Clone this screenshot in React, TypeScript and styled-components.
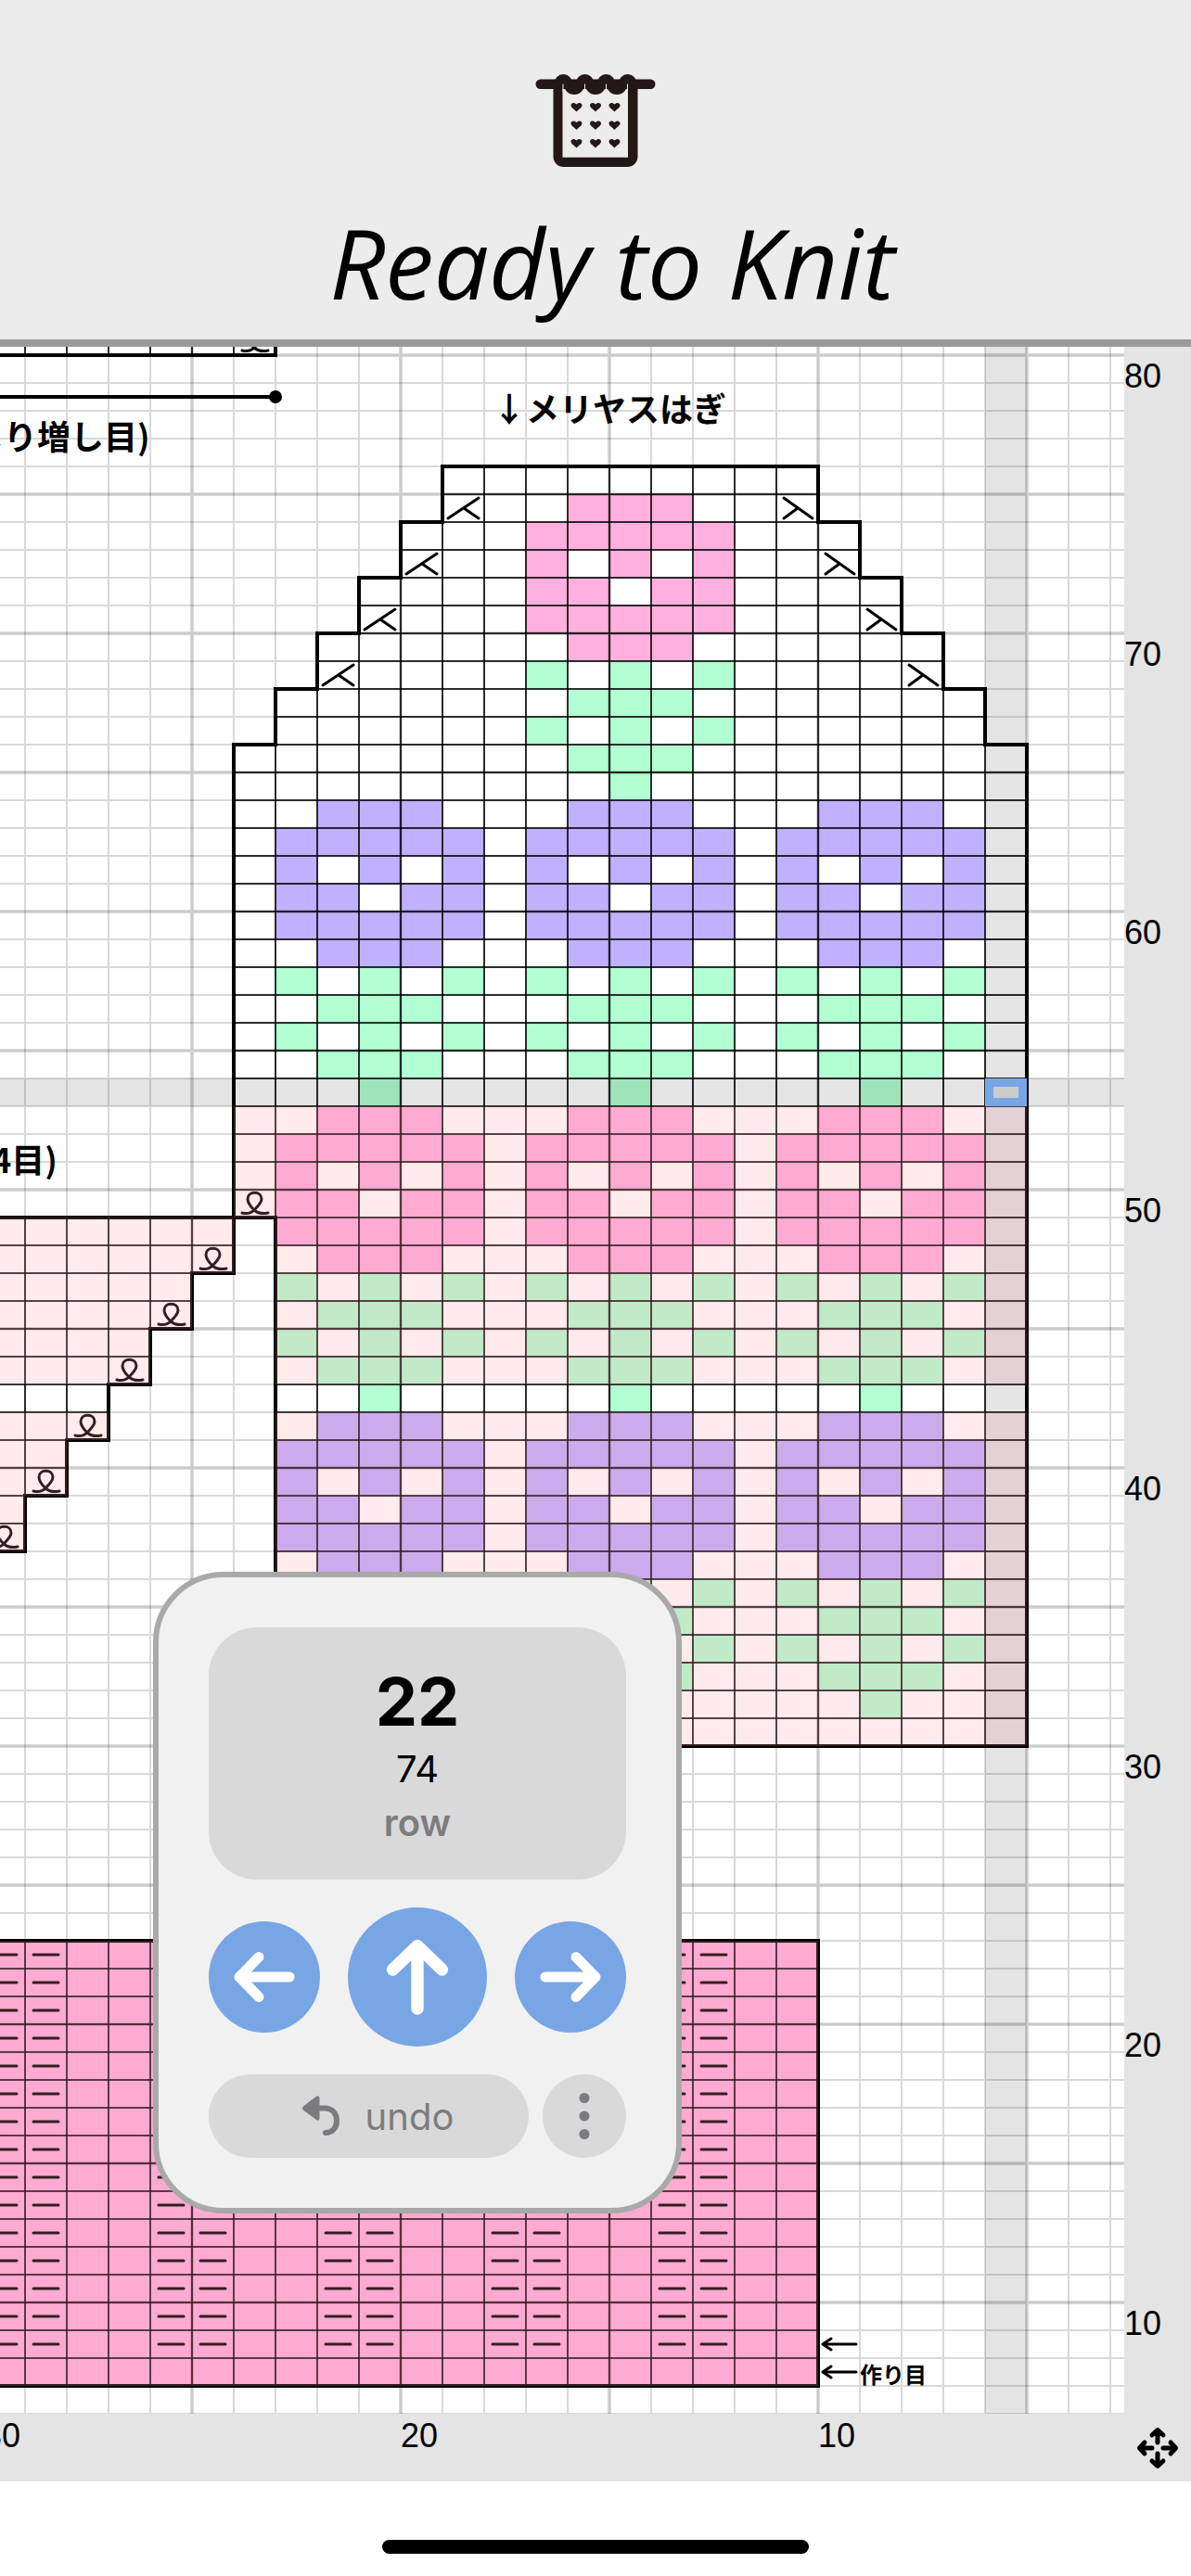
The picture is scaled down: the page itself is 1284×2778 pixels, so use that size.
import React, { useState } from "react";
import styled, { createGlobalStyle } from "styled-components";

const GlobalStyle = createGlobalStyle`
  * {
    box-sizing: border-box;
  }

  body {
    margin: 0;
    background: #fff;
    font-family: Inter, "Noto Sans CJK JP", sans-serif;
  }
`;

const Page = styled.div`
  display: flex;
  flex-direction: column;
  min-height: 100vh;
`;

const Header = styled.header`
  display: flex;
  flex-direction: column;
  align-items: center;
  padding: 80px 0 23px;
  background: #ececec;
  border-bottom: 8px solid #9b9b9b;

  svg {
    width: 130px;
    height: 100px;
  }
`;

const Title = styled.h1`
  margin: 43px 0 0;
  padding-left: 36px;
  font-family: "Open Sans", "Noto Sans", sans-serif;
  font-size: 105px;
  font-style: italic;
  font-weight: 400;
  line-height: 120px;
  white-space: nowrap;
`;

const Board = styled.main`
  position: relative;
  display: grid;
  grid-template-columns: 1fr 72px;
  grid-template-rows: auto 73px;
  background: #e4e4e4;
`;

const ChartView = styled.div`
  display: flex;
  justify-content: flex-end;
  overflow: hidden;
  background: #fff;

  svg {
    flex-shrink: 0;
    display: block;
    width: 1212px;
    height: 2229px;
  }
`;

const RowAxis = styled.div`
  display: flex;
  flex-direction: column;
  gap: 260px;
  padding-top: 12px;
  font-family: "Liberation Sans", sans-serif;
  font-size: 36px;
  line-height: 40px;
`;

const ColumnAxis = styled.div`
  display: flex;
  justify-content: flex-end;
  overflow: hidden;
  padding-right: 288px;
  padding-top: 4px;
  font-family: "Liberation Sans", sans-serif;
  font-size: 36px;
  line-height: 40px;

  span {
    flex: 0 0 450px;
  }

  span:last-child {
    flex-basis: 42px;
  }
`;

const MoveButton = styled.button`
  display: flex;
  align-items: center;
  justify-content: center;
  padding: 0;
  border: 0;
  background: none;

  svg {
    width: 46px;
    height: 46px;
  }
`;

const Counter = styled.section`
  position: absolute;
  left: 165px;
  bottom: 289px;
  display: flex;
  flex-direction: column;
  gap: 30px;
  width: 570px;
  padding: 54px;
  background: #f1f1f1;
  border: 6px solid #a9a9a9;
  border-radius: 76px;
`;

const Display = styled.div`
  display: flex;
  flex-direction: column;
  align-items: center;
  padding: 36px 0 32px;
  background: #d9d9d9;
  border-radius: 52px;
`;

const RowCount = styled.div`
  font-size: 72px;
  font-weight: 700;
  line-height: 88px;
`;

const RowTotal = styled.div`
  font-size: 40px;
  line-height: 58px;
`;

const RowUnit = styled.div`
  color: #7c7c80;
  font-size: 40px;
  font-weight: 600;
  line-height: 58px;
`;

const Controls = styled.div`
  display: flex;
  align-items: center;
  justify-content: space-between;
`;

const RoundButton = styled.button<{ $size: number }>`
  width: ${({ $size }) => $size}px;
  height: ${({ $size }) => $size}px;
  padding: 0;
  border: 0;
  border-radius: 50%;
  background: #78a6e5;

  svg {
    display: block;
    width: 100%;
    height: 100%;
  }
`;

const Actions = styled.div`
  display: flex;
  gap: 15px;
`;

const UndoButton = styled.button`
  flex: 1;
  display: flex;
  align-items: center;
  justify-content: center;
  gap: 28px;
  height: 90px;
  padding: 0 0 0 20px;
  border: 0;
  border-radius: 45px;
  background: #d9d9d9;
  color: #7c7c80;
  font-family: inherit;
  font-size: 40px;

  svg {
    width: 40px;
    height: 44px;
  }
`;

const MoreButton = styled(RoundButton)`
  background: #d9d9d9;
`;

const HomeArea = styled.footer`
  flex: 1;
  display: flex;
  align-items: flex-end;
  justify-content: center;
  min-height: 102px;
  padding-bottom: 24px;
`;

const HomeIndicator = styled.div`
  width: 460px;
  height: 15px;
  border-radius: 8px;
  background: #000;
`;

const CELL_W = 45;
const CELL_H = 30;
const CHART_W = 1212;
const CHART_H = 2229;
const CURRENT_ROW = 26;
const CURRENT_COL = 23;
const SKIPPED_ROW = 37;

const X = (col: number) => 27 + col * CELL_W;
const Y = (row: number) => 9 + row * CELL_H;

const PINK = "#ffb0de";
const GREEN = "#b1ffd2";
const PURPLE = "#bfb1ff";

type Span = { row: number; from: number; to: number };

const rows = (start: number, end: number, from: number, to: number): Span[] =>
  Array.from({ length: end - start + 1 }, (_, i) => ({ row: start + i, from, to }));

const spans: Span[] = [
  ...rows(-1, -1, -1, 6),
  ...rows(4, 5, 10, 19),
  ...rows(6, 7, 9, 20),
  ...rows(8, 9, 8, 21),
  ...rows(10, 11, 7, 22),
  ...rows(12, 13, 6, 23),
  ...rows(14, 30, 5, 24),
  ...rows(31, 49, 6, 24),
  ...rows(31, 32, -1, 5),
  ...rows(33, 34, -1, 4),
  ...rows(35, 36, -1, 3),
  ...rows(37, 38, -1, 2),
  ...rows(39, 40, -1, 1),
  ...rows(41, 42, -1, 0),
  ...rows(57, 72, -1, 19),
];

const doneSpans = spans.filter((s) => s.row > CURRENT_ROW && s.row !== SKIPPED_ROW);

const horizontals = spans
  .map((s) => `M${X(s.from)} ${Y(s.row)}H${X(s.to)}M${X(s.from)} ${Y(s.row + 1)}H${X(s.to)}`)
  .join("");

const verticals = spans
  .map((s) => {
    let d = "";
    for (let c = s.from; c <= s.to; c++) d += `M${X(c)} ${Y(s.row)}v${CELL_H}`;
    return d;
  })
  .join("");

// five stitches wide: six rows of petals, then five rows of stem
const petals = [".###.", "#####", "#.#.#", "##.##", "#####", ".###."];
const stem = ["#.#.#", ".###.", "#.#.#", ".###.", "..#.."];

const flowers = [
  { row: 5, col: 12, color: PINK },
  ...[6, 12, 18].map((col) => ({ row: 16, col, color: PURPLE })),
  ...[6, 12, 18].map((col) => ({ row: 27, col, color: PINK })),
  ...[6, 12, 18].map((col) => ({ row: 38, col, color: PURPLE })),
];

const steps = (points: number[][]) =>
  points.map(([c, r], i) => `${i ? "L" : "M"}${X(c)} ${Y(r)}`).join("");

const outlines = [
  steps([[-1, 0], [6, 0], [6, -1]]),
  steps([
    [10, 4], [19, 4], [19, 6], [20, 6], [20, 8], [21, 8], [21, 10], [22, 10], [22, 12],
    [23, 12], [23, 14], [24, 14], [24, 50], [6, 50], [6, 31], [5, 31], [5, 14], [6, 14],
    [6, 12], [7, 12], [7, 10], [8, 10], [8, 8], [9, 8], [9, 6], [10, 6], [10, 4],
  ]),
  steps([
    [-1, 31], [5, 31], [5, 33], [4, 33], [4, 35], [3, 35], [3, 37], [2, 37], [2, 39],
    [1, 39], [1, 41], [0, 41], [0, 43], [-1, 43],
  ]),
  steps([[-1, 57], [19, 57], [19, 73], [-1, 73]]),
];

const LEFT_DECREASE = "M6 26L39 4M23 15L39 26";
const RIGHT_DECREASE = "M8 4L39 26M8 26L23 15";
const LOOP = "M9 25Q17 27 22 22C26 18 30 14 30 10C30 1 15 1 15 10C15 14 18 18 22 22Q28 27 37 25";
const PURL = "M9 15H36";

const symbols: { col: number; row: number; d: string }[] = [
  ...[0, 1, 2, 3].map((i) => ({ col: 10 - i, row: 5 + i * 2, d: LEFT_DECREASE })),
  ...[0, 1, 2, 3].map((i) => ({ col: 18 + i, row: 5 + i * 2, d: RIGHT_DECREASE })),
  ...[0, 1, 2, 3, 4, 5, 6].map((i) => ({ col: 5 - i, row: 30 + i * 2, d: LOOP })),
  { col: 5, row: -1, d: LOOP },
];

for (let row = 57; row < 72; row++) {
  [-1, 0, 3, 4, 7, 8, 11, 12, 15, 16].forEach((col) => symbols.push({ col, row, d: PURL }));
}

const gridLines = (major: boolean) => {
  let d = "";
  for (let r = 0; r <= 74; r++) if ((r % 5 === 0) === major) d += `M0 ${Y(r)}H${CHART_W}`;
  for (let c = 0; c <= 26; c++) if ((c % 5 === 4) === major) d += `M${X(c)} 0V${CHART_H}`;
  return d;
};

const Logo: React.FC = () => (
  <svg viewBox="0 0 130 100" fill="#231815" aria-hidden="true">
    <rect x="0.5" y="5.5" width="129" height="10.5" rx="5.2" />
    <path
      fillRule="evenodd"
      d="M19.5 9H110.5V89a11 11 0 0 1-11 11H30.5a11 11 0 0 1-11-11ZM29.5 10V89.7H100V10Z"
    />
    {[30.3, 53.6, 76.5, 99.7].map((x) => (
      <path key={x} d={`M${x - 9.8} 10a9.8 10 0 0 1 19.6 0Z`} />
    ))}
    {[42, 65, 88].map((x) => (
      <path key={x} d={`M${x - 11} 8V12c0 5 5 10 11 10s11-5 11-10V8Z`} />
    ))}
    <path d="M30 10.5V19M53.5 10.5V19M76.5 10.5V19M99.5 10.5V19" stroke="#ececec" />
    {[31, 50.5, 70].map((y) =>
      [44.5, 65, 85.5].map((x) => (
        <path
          key={`${x}-${y}`}
          transform={`translate(${x} ${y})`}
          d="M0 9.5C-1.5 7.5-6 5.5-6 2.6C-6-.4-2-1 0 1.6C2-1 6-.4 6 2.6C6 5.5 1.5 7.5 0 9.5Z"
        />
      ))
    )}
  </svg>
);

const KnittingChart: React.FC = () => {
  const majorLines = gridLines(true);

  const stitches = (pattern: string[], col: number, row: number, color: string) =>
    pattern.map((line, r) =>
      line.split("").map((mark, c) =>
        mark === "#" ? (
          <rect
            key={`${col + c}-${row + r}`}
            x={X(col + c)}
            y={Y(row + r)}
            width={CELL_W}
            height={CELL_H}
            fill={color}
          />
        ) : null
      )
    );

  return (
    <svg viewBox={`0 0 ${CHART_W} ${CHART_H}`} fill="none">
      <path d={gridLines(false)} stroke="#d9d9d9" strokeWidth="2" />
      <rect x="0" y={Y(57)} width={X(19)} height={CELL_H * 16} fill={PINK} />
      {flowers.map((f) => (
        <g key={`${f.col}-${f.row}`} shapeRendering="crispEdges">
          {stitches(petals, f.col, f.row, f.color)}
          {stitches(stem, f.col, f.row + 6, GREEN)}
        </g>
      ))}

      <path d={majorLines} stroke="#000" strokeOpacity="0.15" strokeWidth="4" />
      <path d={majorLines} stroke="#000" strokeOpacity="0.06" strokeWidth="2" />
      <g stroke="#000" strokeOpacity="0.8" strokeWidth="2">
        <path d={horizontals} />
        <path d={verticals} />
      </g>

      <g stroke="#000" strokeWidth="4" strokeLinecap="square">
        {outlines.map((d) => (
          <path key={d} d={d} />
        ))}
        <path d={`M-10 54H${X(6)}`} />
      </g>
      <circle cx={X(6)} cy="54" r="7" fill="#000" />

      <g stroke="#000" strokeWidth="3" strokeLinecap="round" strokeLinejoin="round">
        {symbols.map((s) => (
          <path key={`${s.col}-${s.row}`} transform={`translate(${X(s.col)} ${Y(s.row)})`} d={s.d} />
        ))}
        <path d="M887 2154H923M887 2184H923M896 2148L887 2154L896 2160M896 2178L887 2184L896 2190" />
      </g>

      <g fill="#000" fontFamily='"Noto Sans CJK JP", sans-serif' fontWeight="700" fontSize="36">
        <text x="-32" y="111">じり増し目)</text>
        <text x="531" y="81">↓メリヤスはぎ</text>
        <text x="-9" y="891">4目)</text>
        <text x="927" y="2196" fontSize="24">作り目</text>
      </g>

      <g fill="#ff97a0" fillOpacity="0.2" shapeRendering="crispEdges">
        {doneSpans.map((s) => (
          <rect
            key={`${s.row}-${s.to}`}
            x={X(s.from)}
            y={Y(s.row)}
            width={(s.to - s.from) * CELL_W}
            height={CELL_H}
          />
        ))}
      </g>

      <g fill="#000" fillOpacity="0.105">
        <rect x={X(CURRENT_COL)} y="0" width={CELL_W} height={CHART_H} />
        <rect x="0" y={Y(CURRENT_ROW)} width={CHART_W} height={CELL_H} />
      </g>
      <rect
        x={X(CURRENT_COL) + 4.5}
        y={Y(CURRENT_ROW) + 4.5}
        width={CELL_W - 9}
        height={CELL_H - 9}
        stroke="#78a6e5"
        strokeWidth="9"
      />
    </svg>
  );
};

const App: React.FC = () => {
  const [row, setRow] = useState(22);

  return (
    <>
      <GlobalStyle />
      <Page>
        <Header>
          <Logo />
          <Title>Ready to Knit</Title>
        </Header>
        <Board>
          <ChartView>
            <KnittingChart />
          </ChartView>
          <RowAxis>
            {[80, 70, 60, 50, 40, 30, 20, 10].map((n) => (
              <span key={n}>{n}</span>
            ))}
          </RowAxis>
          <ColumnAxis>
            {[30, 20, 10].map((n) => (
              <span key={n}>{n}</span>
            ))}
          </ColumnAxis>
          <MoveButton aria-label="Move">
            <svg viewBox="0 0 46 46" fill="none" stroke="#000" strokeWidth="5" strokeLinecap="round" strokeLinejoin="round">
              <path d="M23 17V4M17 9L23 3.500L29 9M23 29V42M17 37L23 42.500L29 37M17 23H4M9 17L3.500 23L9 29M29 23H42M37 17L42.500 23L37 29" />
            </svg>
          </MoveButton>
          <Counter>
            <Display>
              <RowCount>{row}</RowCount>
              <RowTotal>74</RowTotal>
              <RowUnit>row</RowUnit>
            </Display>
            <Controls>
              <RoundButton $size={120} aria-label="Left">
                <svg viewBox="0 0 120 120" fill="none" stroke="#fff" strokeWidth="11" strokeLinecap="round" strokeLinejoin="round">
                  <path d="M54 38.500L33 60L54 81.500M33 60H87" />
                </svg>
              </RoundButton>
              <RoundButton $size={150} aria-label="Up" onClick={() => setRow(row + 1)}>
                <svg viewBox="0 0 150 150" fill="none" stroke="#fff" strokeWidth="13.400" strokeLinecap="round" strokeLinejoin="round">
                  <path d="M48.500 67L75 41.500L101.500 67M75 42V109" />
                </svg>
              </RoundButton>
              <RoundButton $size={120} aria-label="Right">
                <svg viewBox="0 0 120 120" fill="none" stroke="#fff" strokeWidth="11" strokeLinecap="round" strokeLinejoin="round">
                  <path d="M66 38.500L87 60L66 81.500M87 60H33" />
                </svg>
              </RoundButton>
            </Controls>
            <Actions>
              <UndoButton onClick={() => setRow(row - 1)}>
                <svg viewBox="0 0 40 44" fill="none">
                  <path d="M1.500 11L15 .8Q18.500-1 18.500 3V24Q18.500 28 15 26L1.500 16Q-1.500 13.500 1.500 11Z" fill="currentColor" />
                  <path d="M16 13.500H24C32 13.500 37 19 37 27C37 35 32 40 25 40" stroke="currentColor" strokeWidth="6" strokeLinecap="round" />
                </svg>
                undo
              </UndoButton>
              <MoreButton $size={90} aria-label="More">
                <svg viewBox="0 0 90 90" fill="#7c7c80">
                  <circle cx="45" cy="25.500" r="5.500" />
                  <circle cx="45" cy="45" r="5.500" />
                  <circle cx="45" cy="64.500" r="5.500" />
                </svg>
              </MoreButton>
            </Actions>
          </Counter>
        </Board>
        <HomeArea>
          <HomeIndicator />
        </HomeArea>
      </Page>
    </>
  );
};

export default App;
